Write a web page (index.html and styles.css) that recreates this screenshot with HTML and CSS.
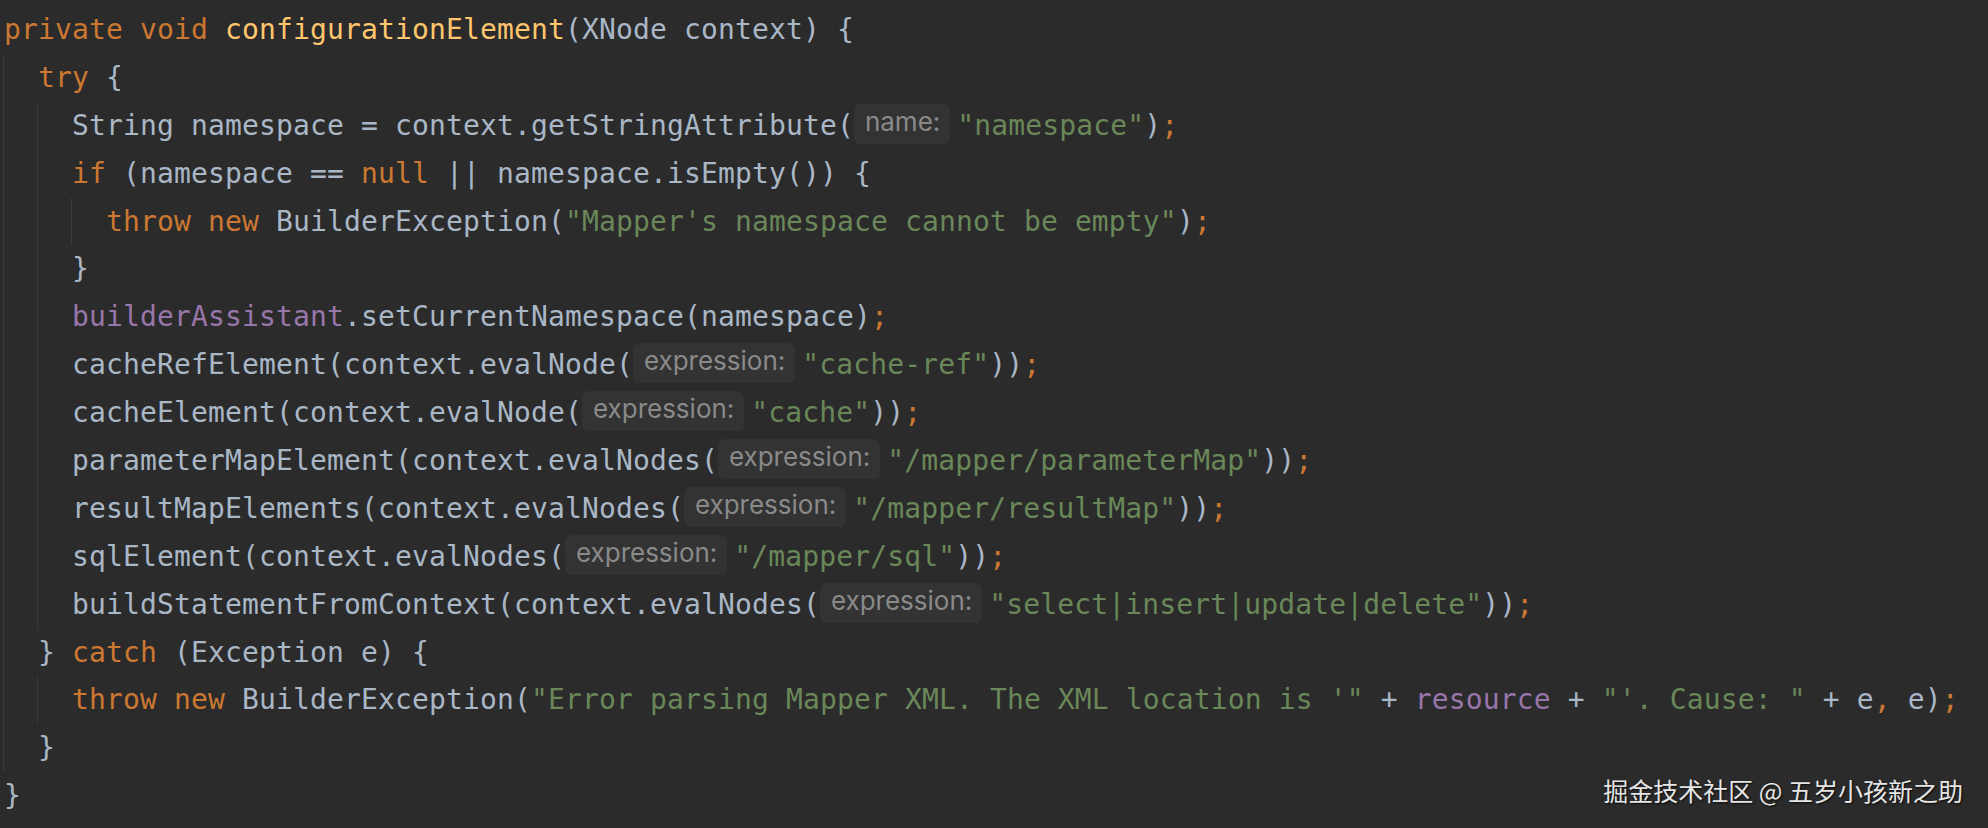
FILE: index.html
```html
<!DOCTYPE html>
<html lang="en">
<head>
<meta charset="utf-8">
<title>configurationElement</title>
<link rel="stylesheet" href="styles.css">
</head>
<body>
<div class="editor">
  <div class="code">
    <div class="ln"><span class="k">private void</span> <span class="m">configurationElement</span>(XNode context) {</div>
    <div class="block">
      <div class="ln"><span class="k">try</span> {</div>
      <div class="block">
        <div class="ln">String namespace = context.getStringAttribute(<span class="hint">name:</span><span class="s">"namespace"</span>)<span class="p">;</span></div>
        <div class="ln"><span class="k">if</span> (namespace == <span class="k">null</span> || namespace.isEmpty()) {</div>
        <div class="block">
          <div class="ln"><span class="k">throw new</span> BuilderException(<span class="s">"Mapper's namespace cannot be empty"</span>)<span class="p">;</span></div>
        </div>
        <div class="ln">}</div>
        <div class="ln"><span class="f">builderAssistant</span>.setCurrentNamespace(namespace)<span class="p">;</span></div>
        <div class="ln">cacheRefElement(context.evalNode(<span class="hint">expression:</span><span class="s">"cache-ref"</span>))<span class="p">;</span></div>
        <div class="ln">cacheElement(context.evalNode(<span class="hint">expression:</span><span class="s">"cache"</span>))<span class="p">;</span></div>
        <div class="ln">parameterMapElement(context.evalNodes(<span class="hint">expression:</span><span class="s">"/mapper/parameterMap"</span>))<span class="p">;</span></div>
        <div class="ln">resultMapElements(context.evalNodes(<span class="hint">expression:</span><span class="s">"/mapper/resultMap"</span>))<span class="p">;</span></div>
        <div class="ln">sqlElement(context.evalNodes(<span class="hint">expression:</span><span class="s">"/mapper/sql"</span>))<span class="p">;</span></div>
        <div class="ln">buildStatementFromContext(context.evalNodes(<span class="hint">expression:</span><span class="s">"select|insert|update|delete"</span>))<span class="p">;</span></div>
      </div>
      <div class="ln">} <span class="k">catch</span> (Exception e) {</div>
      <div class="block">
        <div class="ln"><span class="k">throw new</span> BuilderException(<span class="s">"Error parsing Mapper XML. The XML location is '"</span> + <span class="f">resource</span> + <span class="s">"'. Cause: "</span> + e<span class="p">,</span> e)<span class="p">;</span></div>
      </div>
      <div class="ln">}</div>
    </div>
    <div class="ln">}</div>
  </div>
  <div class="watermark">掘金技术社区 @ 五岁小孩新之助</div>
</div>
</body>
</html>
```
FILE: styles.css
```css
html, body {
  margin: 0;
  padding: 0;
  background: #2b2b2b;
}

.editor {
  position: relative;
  width: 1988px;
  height: 828px;
  overflow: hidden;
  background: #2b2b2b;
}

.code {
  padding: 6px 0 0 4px;
  font-family: "DejaVu Sans Mono", "Liberation Mono", monospace;
  font-size: 28px;
  letter-spacing: 0.14px;
  line-height: 47.9px;
  color: #a9b7c6;
}

.ln {
  white-space: pre;
  height: 47.9px;
}

.block {
  margin-left: -1px;
  padding-left: 34px;
  border-left: 1px solid #3a3a3a;
}

.k { color: #cc7832; }
.m { color: #ffc66d; }
.s { color: #6a8759; }
.f { color: #9876aa; }
.p { color: #cc7832; }

.hint {
  display: inline-block;
  vertical-align: top;
  margin: 2px 7px 0 0;
  height: 36px;
  padding: 0 10px 4px 11px;
  border-radius: 7px;
  background: #333333;
  color: #8a8a8a;
  font-family: Inter, "Noto Sans", sans-serif;
  font-size: 26px;
  letter-spacing: 0;
  line-height: 36px;
}

.watermark {
  position: absolute;
  right: 25px;
  top: 774px;
  font-family: "Noto Sans CJK SC", "Noto Sans", sans-serif;
  font-size: 25px;
  line-height: 32px;
  color: #e6e6e6;
  text-shadow: 1px 1px 2px rgba(0, 0, 0, 0.8);
  white-space: nowrap;
}
```
